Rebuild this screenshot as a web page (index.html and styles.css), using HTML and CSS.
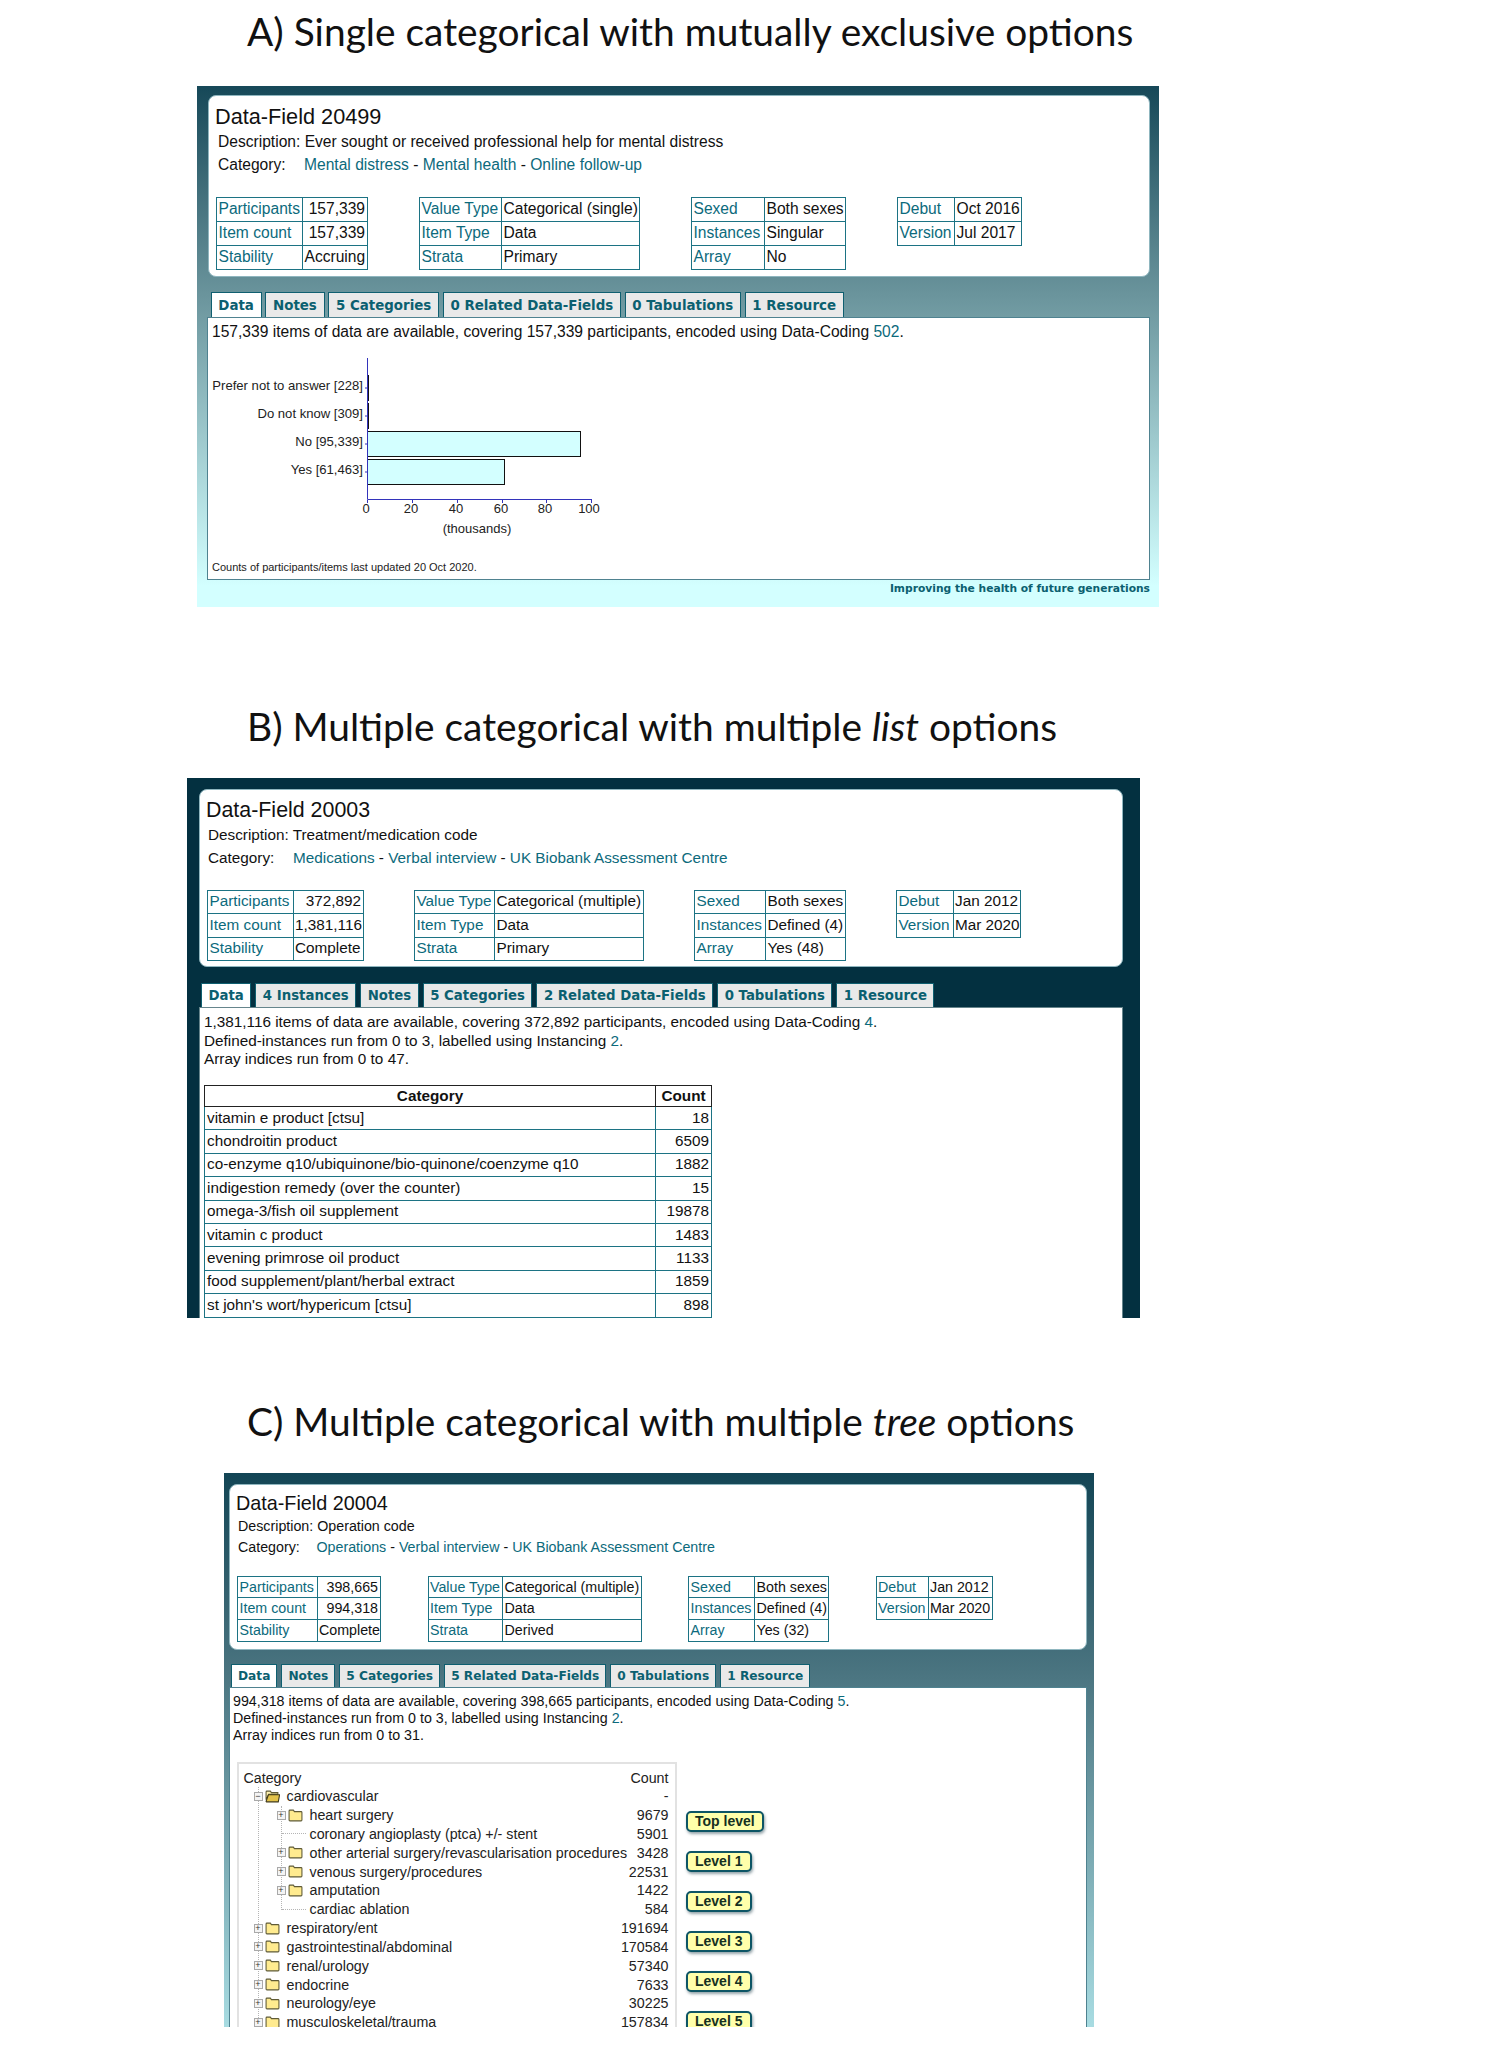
FILE: index.html
```html
<!DOCTYPE html>
<html lang="en">
<head>
<meta charset="utf-8">
<title>Categorical data-field types</title>
<link rel="stylesheet" href="styles.css">
</head>
<body>
<svg class="defs" aria-hidden="true">
  <symbol id="folder" viewBox="0 0 14 12">
    <path d="M1 3V1.8Q1 1 1.8 1H5L6 2.4H12.2Q13 2.4 13 3.2V10.2Q13 11 12.2 11H1.8Q1 11 1 10.2Z" fill="#ffeb8f" stroke="#5f5a35" stroke-width="1"/>
  </symbol>
  <symbol id="folder-open" viewBox="0 0 14 12">
    <path d="M1 9V1.8Q1 1 1.8 1H5L6 2.4H12V4H3.4Z" fill="#fff2b0" stroke="#5f5a35" stroke-width="1"/>
    <path d="M1 10.6 3.2 4.4H13.6L12.4 11H1.4Z" fill="#e2c24a" stroke="#3f3918" stroke-width="1"/>
  </symbol>
</svg>

<section class="block block-a">
  <h2 class="heading">A) Single categorical with mutually exclusive options</h2>
  <div class="panel panel-a">
    <div class="card">
      <h3 class="title">Data-Field 20499</h3>
      <p class="line">Description: Ever sought or received professional help for mental distress</p>
      <p class="line"><span class="cat-label">Category:</span><a class="link">Mental distress</a> - <a class="link">Mental health</a> - <a class="link">Online follow-up</a></p>
      <div class="meta-row">
        <table class="meta m1">
          <tr><th>Participants</th><td class="num">157,339</td></tr>
          <tr><th>Item count</th><td class="num">157,339</td></tr>
          <tr><th>Stability</th><td>Accruing</td></tr>
        </table>
        <table class="meta m2">
          <tr><th>Value Type</th><td>Categorical (single)</td></tr>
          <tr><th>Item Type</th><td>Data</td></tr>
          <tr><th>Strata</th><td>Primary</td></tr>
        </table>
        <table class="meta m3">
          <tr><th>Sexed</th><td>Both sexes</td></tr>
          <tr><th>Instances</th><td>Singular</td></tr>
          <tr><th>Array</th><td>No</td></tr>
        </table>
        <table class="meta m4">
          <tr><th>Debut</th><td>Oct 2016</td></tr>
          <tr><th>Version</th><td>Jul 2017</td></tr>
        </table>
      </div>
    </div>
    <nav class="tabs">
      <span class="tab tab-on">Data</span><span class="tab">Notes</span><span class="tab">5 Categories</span><span class="tab">0 Related Data-Fields</span><span class="tab">0 Tabulations</span><span class="tab">1 Resource</span>
    </nav>
    <div class="content">
      <p class="line">157,339 items of data are available, covering 157,339 participants, encoded using Data-Coding <a class="link">502</a>.</p>
      <svg class="chart" width="400" height="210" viewBox="0 0 400 210">
        <g class="chart-bars">
          <rect x="159.5" y="30.5" width="1" height="25"/>
          <rect x="159.5" y="58.5" width="1" height="25"/>
          <rect x="159.5" y="86.5" width="213" height="25"/>
          <rect x="159.5" y="114.5" width="137" height="25"/>
        </g>
        <path class="chart-axis" d="M159.5 13V154.5H384M157 43H159M157 71H159M157 99H159M157 127H159M159.500 155V158M204.500 155V158M249.500 155V158M294.500 155V158M338.500 155V158M383.500 155V158"/>
        <g class="chart-labels">
          <text x="155" y="41.500">Prefer not to answer [228]</text>
          <text x="155" y="69.500">Do not know [309]</text>
          <text x="155" y="97.500">No [95,339]</text>
          <text x="155" y="125.500">Yes [61,463]</text>
        </g>
        <g class="chart-ticks">
          <text x="158" y="165">0</text>
          <text x="203" y="165">20</text>
          <text x="248" y="165">40</text>
          <text x="293" y="165">60</text>
          <text x="337" y="165">80</text>
          <text x="381" y="165">100</text>
          <text x="269" y="185">(thousands)</text>
        </g>
      </svg>
      <p class="updated">Counts of participants/items last updated 20 Oct 2020.</p>
    </div>
    <p class="motto">Improving the health of future generations</p>
  </div>
</section>

<section class="block block-b">
  <h2 class="heading">B) Multiple categorical with multiple <em>list</em> options</h2>
  <div class="panel panel-b">
    <div class="card">
      <h3 class="title">Data-Field 20003</h3>
      <p class="line">Description: Treatment/medication code</p>
      <p class="line"><span class="cat-label">Category:</span><a class="link">Medications</a> - <a class="link">Verbal interview</a> - <a class="link">UK Biobank Assessment Centre</a></p>
      <div class="meta-row">
        <table class="meta m1">
          <tr><th>Participants</th><td class="num">372,892</td></tr>
          <tr><th>Item count</th><td class="num">1,381,116</td></tr>
          <tr><th>Stability</th><td>Complete</td></tr>
        </table>
        <table class="meta m2">
          <tr><th>Value Type</th><td>Categorical (multiple)</td></tr>
          <tr><th>Item Type</th><td>Data</td></tr>
          <tr><th>Strata</th><td>Primary</td></tr>
        </table>
        <table class="meta m3">
          <tr><th>Sexed</th><td>Both sexes</td></tr>
          <tr><th>Instances</th><td>Defined (4)</td></tr>
          <tr><th>Array</th><td>Yes (48)</td></tr>
        </table>
        <table class="meta m4">
          <tr><th>Debut</th><td>Jan 2012</td></tr>
          <tr><th>Version</th><td>Mar 2020</td></tr>
        </table>
      </div>
    </div>
    <nav class="tabs">
      <span class="tab tab-on">Data</span><span class="tab">4 Instances</span><span class="tab">Notes</span><span class="tab">5 Categories</span><span class="tab">2 Related Data-Fields</span><span class="tab">0 Tabulations</span><span class="tab">1 Resource</span>
    </nav>
    <div class="content">
      <p class="line">1,381,116 items of data are available, covering 372,892 participants, encoded using Data-Coding <a class="link">4</a>.</p>
      <p class="line">Defined-instances run from 0 to 3, labelled using Instancing <a class="link">2</a>.</p>
      <p class="line">Array indices run from 0 to 47.</p>
      <table class="counts">
        <tr><th>Category</th><th class="count-col">Count</th></tr>
        <tr><td>vitamin e product [ctsu]</td><td class="num">18</td></tr>
        <tr><td>chondroitin product</td><td class="num">6509</td></tr>
        <tr><td>co-enzyme q10/ubiquinone/bio-quinone/coenzyme q10</td><td class="num">1882</td></tr>
        <tr><td>indigestion remedy (over the counter)</td><td class="num">15</td></tr>
        <tr><td>omega-3/fish oil supplement</td><td class="num">19878</td></tr>
        <tr><td>vitamin c product</td><td class="num">1483</td></tr>
        <tr><td>evening primrose oil product</td><td class="num">1133</td></tr>
        <tr><td>food supplement/plant/herbal extract</td><td class="num">1859</td></tr>
        <tr><td>st john's wort/hypericum [ctsu]</td><td class="num">898</td></tr>
      </table>
    </div>
  </div>
</section>

<section class="block block-c">
  <h2 class="heading">C) Multiple categorical with multiple <em>tree</em> options</h2>
  <div class="panel panel-c">
    <div class="card">
      <h3 class="title">Data-Field 20004</h3>
      <p class="line">Description: Operation code</p>
      <p class="line"><span class="cat-label">Category:</span><a class="link">Operations</a> - <a class="link">Verbal interview</a> - <a class="link">UK Biobank Assessment Centre</a></p>
      <div class="meta-row">
        <table class="meta m1">
          <tr><th>Participants</th><td class="num">398,665</td></tr>
          <tr><th>Item count</th><td class="num">994,318</td></tr>
          <tr><th>Stability</th><td>Complete</td></tr>
        </table>
        <table class="meta m2">
          <tr><th>Value Type</th><td>Categorical (multiple)</td></tr>
          <tr><th>Item Type</th><td>Data</td></tr>
          <tr><th>Strata</th><td>Derived</td></tr>
        </table>
        <table class="meta m3">
          <tr><th>Sexed</th><td>Both sexes</td></tr>
          <tr><th>Instances</th><td>Defined (4)</td></tr>
          <tr><th>Array</th><td>Yes (32)</td></tr>
        </table>
        <table class="meta m4">
          <tr><th>Debut</th><td>Jan 2012</td></tr>
          <tr><th>Version</th><td>Mar 2020</td></tr>
        </table>
      </div>
    </div>
    <nav class="tabs">
      <span class="tab tab-on">Data</span><span class="tab">Notes</span><span class="tab">5 Categories</span><span class="tab">5 Related Data-Fields</span><span class="tab">0 Tabulations</span><span class="tab">1 Resource</span>
    </nav>
    <div class="content">
      <p class="line">994,318 items of data are available, covering 398,665 participants, encoded using Data-Coding <a class="link">5</a>.</p>
      <p class="line">Defined-instances run from 0 to 3, labelled using Instancing <a class="link">2</a>.</p>
      <p class="line">Array indices run from 0 to 31.</p>
      <div class="tree-area">
        <div class="tree">
          <div class="row"><span class="label">Category</span><span>Count</span></div>
          <div class="group1">
            <div class="row">
              <span class="exp">&#8722;</span><svg class="folder"><use href="#folder-open"/></svg>
              <span class="label">cardiovascular</span><span>-</span>
            </div>
            <div class="group2">
              <div class="row"><span class="exp">+</span><svg class="folder"><use href="#folder"/></svg><span class="label">heart surgery</span><span>9679</span></div>
              <div class="row"><span class="stub"></span><span class="label">coronary angioplasty (ptca) +/- stent</span><span>5901</span></div>
              <div class="row"><span class="exp">+</span><svg class="folder"><use href="#folder"/></svg><span class="label">other arterial surgery/revascularisation procedures</span><span>3428</span></div>
              <div class="row"><span class="exp">+</span><svg class="folder"><use href="#folder"/></svg><span class="label">venous surgery/procedures</span><span>22531</span></div>
              <div class="row"><span class="exp">+</span><svg class="folder"><use href="#folder"/></svg><span class="label">amputation</span><span>1422</span></div>
              <div class="row"><span class="stub"></span><span class="label">cardiac ablation</span><span>584</span></div>
            </div>
            <div class="row"><span class="exp">+</span><svg class="folder"><use href="#folder"/></svg><span class="label">respiratory/ent</span><span>191694</span></div>
            <div class="row"><span class="exp">+</span><svg class="folder"><use href="#folder"/></svg><span class="label">gastrointestinal/abdominal</span><span>170584</span></div>
            <div class="row"><span class="exp">+</span><svg class="folder"><use href="#folder"/></svg><span class="label">renal/urology</span><span>57340</span></div>
            <div class="row"><span class="exp">+</span><svg class="folder"><use href="#folder"/></svg><span class="label">endocrine</span><span>7633</span></div>
            <div class="row"><span class="exp">+</span><svg class="folder"><use href="#folder"/></svg><span class="label">neurology/eye</span><span>30225</span></div>
            <div class="row"><span class="exp">+</span><svg class="folder"><use href="#folder"/></svg><span class="label">musculoskeletal/trauma</span><span>157834</span></div>
          </div>
        </div>
        <div class="badges">
          <span class="badge">Top level</span>
          <span class="badge">Level 1</span>
          <span class="badge">Level 2</span>
          <span class="badge">Level 3</span>
          <span class="badge">Level 4</span>
          <span class="badge">Level 5</span>
        </div>
      </div>
    </div>
  </div>
</section>
</body>
</html>
```
FILE: styles.css
```css
* { box-sizing: border-box; }
html, body { margin: 0; padding: 0; background: #fff; }
body { font-family: "Liberation Sans", Arial, sans-serif; color: #111; width: 1498px; }
h2, h3, p { margin: 0; font-weight: normal; }
.defs { width: 0; height: 0; position: absolute; }

.heading {
  font-family: Lato, "Open Sans", sans-serif;
  font-size: 38.9px;
  line-height: 62px;
  height: 62px;
  padding-left: 247px;
  color: #111;
  white-space: nowrap;
}
.block-a .heading { margin-bottom: 24px; }
.block-b { margin-top: 88px; }
.block-b .heading { margin-bottom: 21px; }
.block-c { margin-top: 72px; }
.block-c .heading { margin-bottom: 21px; }

.panel { overflow: hidden; }
.panel-a {
  margin-left: 197px; width: 962px; height: 521px; padding: 9px 9px 0 10px;
  background: linear-gradient(#164858, #6a949c 40%, #d3ffff 96%);
  --title: 21.7px; --text: 15.6px; --tab: 13.4px;
}
.panel-b {
  margin-left: 187px; width: 953px; height: 540px; padding: 11px 17px 0 12px;
  background: #033040;
  --title: 21.4px; --text: 15.3px; --tab: 13.3px;
}
.panel-c {
  margin-left: 224px; width: 870px; height: 554px; padding: 11px 7px 0 5px;
  background: linear-gradient(#134555, #4a7480 36%, #a8dce2);
  --title: 19.8px; --text: 14.26px; --tab: 12.2px;
}

.card {
  background: #fff;
  border: 1px solid #8fb6bf;
  border-radius: 8px;
  padding-left: 7px;
  font-size: var(--text);
}
.panel-a .card { margin-left: 1px; height: 182px; padding-top: 8px; }
.panel-b .card { height: 178px; padding-top: 8px; }
.panel-c .card { height: 166px; padding-top: 6px; }

.title { font-size: var(--title); line-height: 26px; margin-left: -1px; color: #111; }
.panel-b .title { line-height: 25px; }
.panel-c .title { line-height: 25px; }
.line { font-size: var(--text); line-height: 23px; white-space: nowrap; }
.card .line { padding-left: 1px; }
.panel-a .card .line { padding-left: 2px; }
.panel-c .card .line { line-height: 21px; }
.link { color: #0c6a7c; }
.cat-label { display: inline-block; }
.panel-a .cat-label { width: 86px; }
.panel-b .cat-label { width: 85px; }
.panel-c .cat-label { width: 78.5px; }

.meta-row { display: flex; }
.panel-a .meta-row { gap: 51px; margin-top: 21px; }
.panel-b .meta-row { gap: 50px; margin-top: 20.5px; }
.panel-c .meta-row { gap: 46.5px; margin-top: 17.5px; }

.meta {
  border-collapse: collapse;
  table-layout: fixed;
  font-size: var(--text);
  align-self: flex-start;
}
.meta th, .meta td { border: 1px solid #1c7384; padding: 0 2px 2px 1.5px; white-space: nowrap; overflow: hidden; line-height: 1; }
.panel-c .meta th, .panel-c .meta td { padding-bottom: 0; }
.meta th { font-weight: normal; text-align: left; color: #0c6a7c; }
.meta .num { text-align: right; }
.panel-a .meta tr { height: 24px; }
.panel-b .meta tr { height: 23.5px; }
.panel-c .meta tr { height: 21.7px; }

.panel-a .m1 { width: 152px; } .panel-a .m1 th { width: 86px; }
.panel-a .m2 { width: 221px; } .panel-a .m2 th { width: 82px; }
.panel-a .m3 { width: 155px; } .panel-a .m3 th { width: 73px; }
.panel-a .m4 { width: 125px; } .panel-a .m4 th { width: 57px; }
.panel-b .m1 { width: 157px; } .panel-b .m1 th { width: 85.5px; }
.panel-b .m2 { width: 230px; } .panel-b .m2 th { width: 80px; }
.panel-b .m3 { width: 152px; } .panel-b .m3 th { width: 71px; }
.panel-b .m4 { width: 125px; } .panel-b .m4 th { width: 56.5px; }
.panel-c .m1 { width: 144px; } .panel-c .m1 th { width: 79.5px; }
.panel-c .m2 { width: 214px; } .panel-c .m2 th { width: 74.5px; }
.panel-c .m3 { width: 141px; } .panel-c .m3 th { width: 66px; }
.panel-c .m4 { width: 117px; } .panel-c .m4 th { width: 52px; }

.tabs { display: flex; }
.panel-a .tabs { margin: 15px 0 0 3.5px; gap: 3.5px; height: 25px; }
.panel-b .tabs { margin: 16px 0 0 2px; gap: 4px; height: 24px; }
.panel-c .tabs { margin: 14px 0 0 2px; gap: 4px; height: 23px; }
.tab {
  display: flex; align-items: center;
  padding: 0 6.5px;
  background: #e9e9e9;
  border: 1px solid #0f5f70;
  border-bottom: 0;
  color: #0b6070;
  font-family: "DejaVu Sans", Verdana, sans-serif;
  font-size: var(--tab);
  font-weight: bold;
  white-space: nowrap;
}
.panel-a .tab { padding: 0 6.8px; }
.panel-c .tab { padding: 0 6px; }
.tab-on { background: #fff; }

.content { background: #fff; border: 1px solid #4f8290; }
.panel-a .content { height: 263px; padding: 5px 4px 0; }
.panel-b .content { height: 320px; padding: 5px 4px 0; border-color: #66858c; border-bottom: 0; }
.panel-c .content { height: 360px; padding: 5px 3px 0; border-bottom: 0; }
.panel-b .content .line { line-height: 18.5px; }
.panel-a .content .line { line-height: 18.5px; }
.panel-c .content .line { line-height: 17px; }

.chart { display: block; margin: 3.5px 0 0 -4px; }
.chart-bars rect { fill: #d3ffff; stroke: #111; stroke-width: 1; }
.chart-axis { fill: none; stroke: #3333bb; stroke-width: 1; }
.chart-labels text { font-size: 13.1px; text-anchor: end; fill: #222; dominant-baseline: middle; }
.chart-ticks text { font-size: 13px; text-anchor: middle; fill: #222; dominant-baseline: middle; }
.updated { font-size: 11px; line-height: 16px; margin-top: 4px; color: #222; }
.motto {
  text-align: right;
  font-family: "DejaVu Sans", Verdana, sans-serif;
  font-weight: bold;
  font-size: 10.7px;
  line-height: 18px;
  color: #0b6070;
}

.counts { border-collapse: collapse; table-layout: fixed; width: 508px; margin-top: 16.5px; font-size: 15.3px; }
.counts th, .counts td { border: 1px solid #1c7384; padding: 0 2px 2px; line-height: 1; white-space: nowrap; }
.counts tr { height: 23.4px; }
.counts tr:first-child { height: 21px; }
.counts th { border-color: #222; font-weight: bold; padding-bottom: 0; }
.count-col { width: 56px; }
.counts .num { text-align: right; }

.tree-area { display: flex; margin: 18px 0 0 3.5px; align-items: flex-start; gap: 9px; }
.tree {
  width: 440px; height: 270px; overflow: hidden;
  border: 2px solid #e2e2e2; border-bottom: 0;
  padding: 4.6px 6px 0 5px;
  font-size: 14.26px; color: #222;
  flex: none;
}
.row { display: flex; align-items: center; height: 18.85px; white-space: nowrap; }
.label { flex: 1; }
.group1 { margin: -0.7px 0 0 14px; border-left: 1px dotted #b5b5b5; }
.group2 { margin-left: 22px; border-left: 1px dotted #b5b5b5; height: 104px; margin-bottom: 9.1px; }
.exp {
  flex: none; width: 9px; height: 9px; margin-left: -5px;
  display: flex; align-items: center; justify-content: center;
  background: #f4f4f4; border: 1px solid #a9a9a9;
  font-size: 9px; line-height: 1; color: #333;
}
.folder { flex: none; width: 15px; height: 13px; margin: 0 7px 0 2px; }
.stub { flex: none; width: 24px; border-top: 1px dotted #b5b5b5; margin-right: 4px; }

.badges { display: flex; flex-direction: column; gap: 19px; margin-top: 49px; align-items: flex-start; }
.badge {
  display: block;
  height: 21px; line-height: 17px;
  padding: 0 7.5px;
  background: #ffffaa;
  border: 2px solid #0d5565;
  border-radius: 5px;
  box-shadow: 1px 2px 3px rgba(60, 90, 100, .55);
  font-size: 14px; font-weight: bold; color: #15301f;
  white-space: nowrap;
}
```
